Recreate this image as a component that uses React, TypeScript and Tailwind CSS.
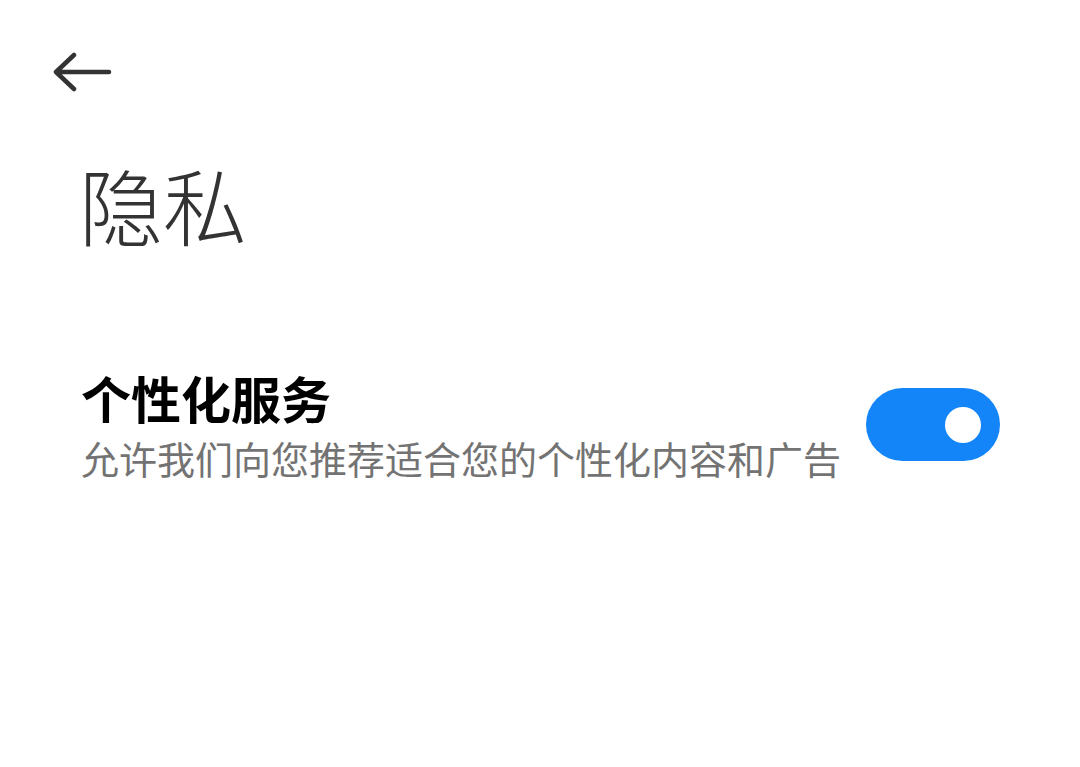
import { useState } from 'react';

function BackArrow() {
    return (
        <svg width="60" height="42" viewBox="0 0 60 42" fill="none">
            <path
                d="M3 20H56M3 20L21 3M3 20L21 37"
                stroke="#333333"
                strokeWidth="4.5"
                strokeLinecap="round"
                strokeLinejoin="round"
            />
        </svg>
    );
}

function Toggle({ on, onChange }: { on: boolean; onChange: () => void }) {
    return (
        <button
            onClick={onChange}
            className={`${
                on ? 'bg-[#1485f8] justify-end' : 'bg-gray-300 justify-start'
            } flex h-[73px] w-[134px] shrink-0 items-center rounded-full px-[19px]`}
        >
            <span className="block h-[36px] w-[36px] rounded-full bg-white" />
        </button>
    );
}

export default function App() {
    const [enabled, setEnabled] = useState(true);

    return (
        <div className="min-h-[767px] w-full bg-white font-['Noto_Sans_CJK_SC',sans-serif]">
            <div className="pt-[52px] pl-[53px]">
                <BackArrow />
            </div>

            <h1 className="mt-[68px] pl-[79px] text-[84px] leading-none font-light text-[#333333]">
                隐私
            </h1>

            <div className="mt-[126px] flex items-center justify-between pl-[81px] pr-[80px]">
                <div className="flex flex-col">
                    <span className="text-[50px] leading-none font-bold text-black">
                        个性化服务
                    </span>
                    <span className="mt-[17px] text-[38px] leading-none text-[#737373]">
                        允许我们向您推荐适合您的个性化内容和广告
                    </span>
                </div>
                <Toggle on={enabled} onChange={() => setEnabled(!enabled)} />
            </div>
        </div>
    );
}
